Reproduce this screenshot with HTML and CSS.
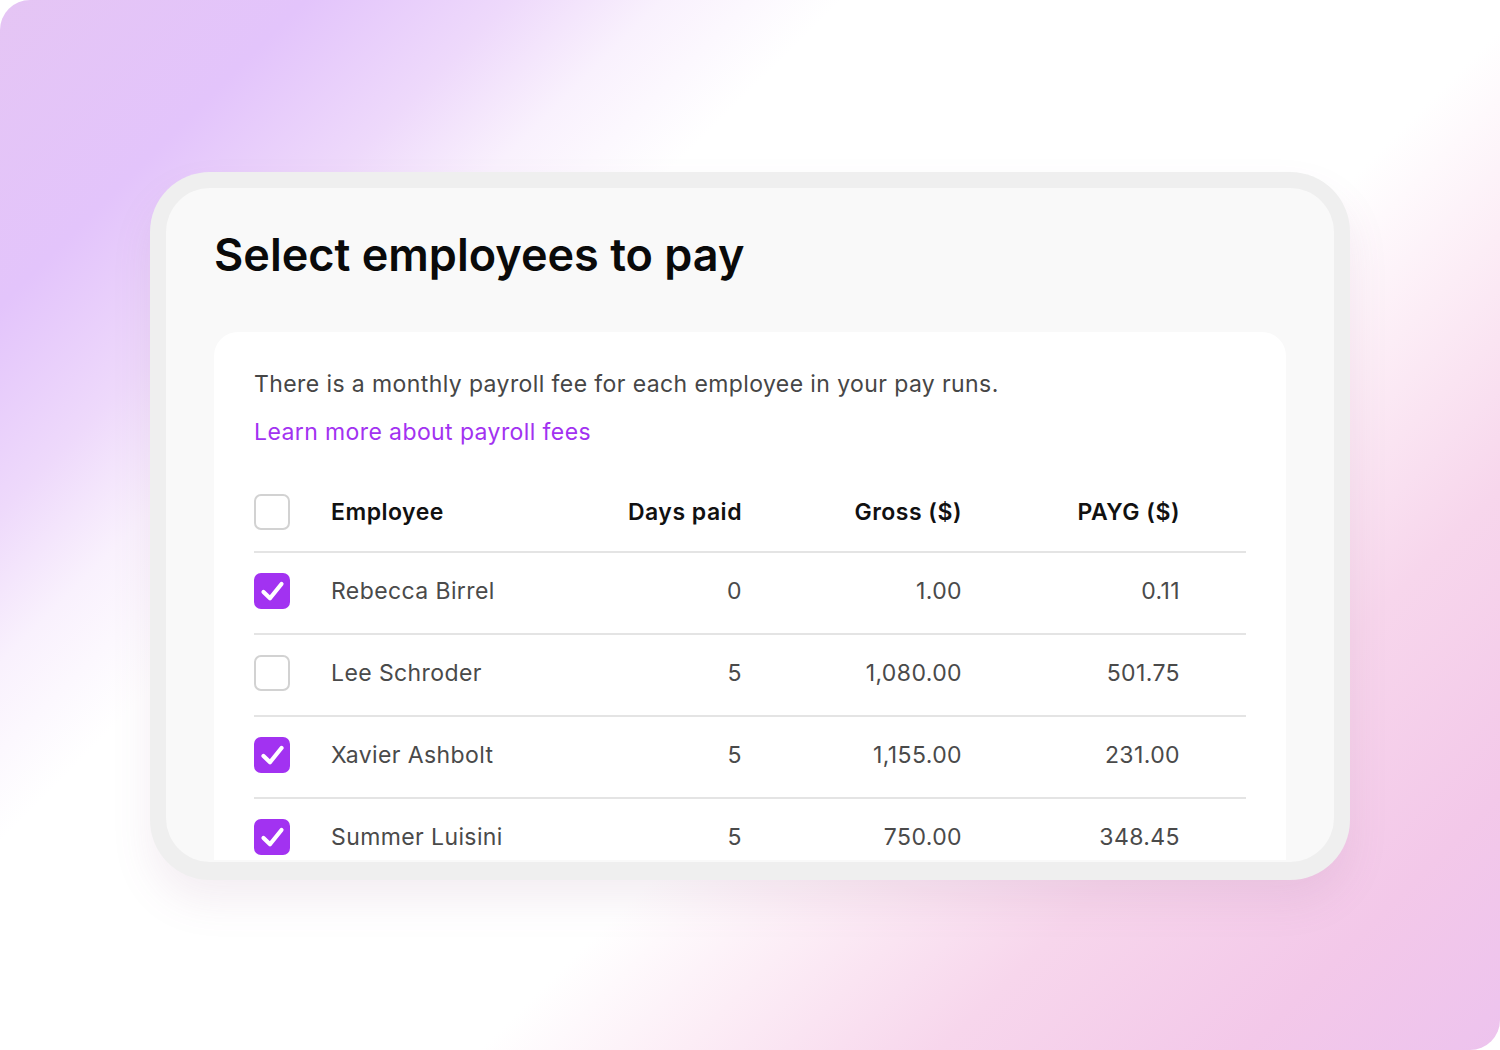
FILE: index.html
```html
<!DOCTYPE html>
<html lang="en">
<head>
<meta charset="utf-8">
<title>Select employees to pay</title>
<link rel="stylesheet" href="styles.css">
</head>
<body>
<div class="canvas">
  <div class="frame">
    <div class="sheet">
      <h1 class="title">Select employees to pay</h1>
      <div class="panel">
        <p class="fee">There is a monthly payroll fee for each employee in your pay runs.</p>
        <a class="link" href="#">Learn more about payroll fees</a>
        <div class="table">
          <div class="row head">
            <span class="box"></span>
            <span class="cell name">Employee</span>
            <span class="cell num">Days paid</span>
            <span class="cell num">Gross ($)</span>
            <span class="cell num">PAYG ($)</span>
            <span></span>
          </div>
          <div class="row">
            <span class="box on"><svg viewBox="0 0 36 36" width="36" height="36"><path d="M9.5 19 L16 25.2 L27.5 11" fill="none" stroke="#fff" stroke-width="4.2" stroke-linecap="round" stroke-linejoin="round"/></svg></span>
            <span class="cell name">Rebecca Birrel</span>
            <span class="cell num">0</span>
            <span class="cell num">1.00</span>
            <span class="cell num">0.11</span>
            <span></span>
          </div>
          <div class="row">
            <span class="box"></span>
            <span class="cell name">Lee Schroder</span>
            <span class="cell num">5</span>
            <span class="cell num">1,080.00</span>
            <span class="cell num">501.75</span>
            <span></span>
          </div>
          <div class="row">
            <span class="box on"><svg viewBox="0 0 36 36" width="36" height="36"><path d="M9.5 19 L16 25.2 L27.5 11" fill="none" stroke="#fff" stroke-width="4.2" stroke-linecap="round" stroke-linejoin="round"/></svg></span>
            <span class="cell name">Xavier Ashbolt</span>
            <span class="cell num">5</span>
            <span class="cell num">1,155.00</span>
            <span class="cell num">231.00</span>
            <span></span>
          </div>
          <div class="row">
            <span class="box on"><svg viewBox="0 0 36 36" width="36" height="36"><path d="M9.5 19 L16 25.2 L27.5 11" fill="none" stroke="#fff" stroke-width="4.2" stroke-linecap="round" stroke-linejoin="round"/></svg></span>
            <span class="cell name">Summer Luisini</span>
            <span class="cell num">5</span>
            <span class="cell num">750.00</span>
            <span class="cell num">348.45</span>
            <span></span>
          </div>
        </div>
      </div>
    </div>
  </div>
</div>
</body>
</html>
```

FILE: styles.css
```css
* { box-sizing: border-box; }

html, body {
  margin: 0;
  padding: 0;
  background: #ffffff;
}

body {
  font-family: Inter, "Noto Sans", "Liberation Sans", sans-serif;
  width: 1500px;
  height: 1050px;
  overflow: hidden;
}

.canvas {
  width: 1500px;
  height: 1050px;
  border-radius: 30px;
  padding: 172px 0 0 150px;
  background: linear-gradient(135deg,
    #e5c5f4 0%,
    #e3c4fb 12%,
    #eed9fb 20%,
    #f9f1fd 26%,
    #ffffff 33%,
    #ffffff 60%,
    #fcedf6 68%,
    #f7d6ec 78%,
    #f3c8e9 90%,
    #edc3ee 100%);
}

.frame {
  width: 1200px;
  background: #efefef;
  border-radius: 60px;
  padding: 16px 16px 18px;
  box-shadow: 0 22px 40px rgba(150, 90, 140, 0.10);
}

.sheet {
  height: 674px;
  background: #f9f9f9;
  border-radius: 44px;
  padding: 40px 48px 0;
  overflow: hidden;
}

.title {
  margin: 0;
  font-size: 45px;
  line-height: 53px;
  font-weight: 600;
  letter-spacing: 0;
  color: #0a0a0a;
}

.panel {
  margin-top: 51px;
  height: 528px;
  background: #ffffff;
  border-radius: 24px 24px 0 0;
  padding: 36px 40px 0;
  overflow: hidden;
}

.fee {
  margin: 0;
  font-size: 23px;
  line-height: 32px;
  letter-spacing: 0.4px;
  color: #464646;
}

.link {
  display: block;
  margin-top: 16px;
  font-size: 23px;
  line-height: 32px;
  letter-spacing: 0.4px;
  color: #a232f1;
  text-decoration: none;
}

.table {
  margin-top: 26px;
}

.row {
  display: grid;
  grid-template-columns: 77px 260px 151px 220px 218px 66px;
  align-items: center;
  height: 82px;
  padding-bottom: 5px;
  border-bottom: 2px solid #e4e4e4;
  font-size: 23px;
  line-height: 30px;
  letter-spacing: 0.4px;
  color: #4a4a4a;
}

.row.head {
  height: 79px;
  padding-bottom: 2px;
  font-weight: 600;
  letter-spacing: 0.5px;
  color: #111111;
}

.box {
  display: block;
  width: 36px;
  height: 36px;
  border: 2px solid #d2d2d2;
  border-radius: 7px;
  background: #ffffff;
}

.box.on {
  border: none;
  background: #a232f1;
}

.box svg { display: block; }

.cell.num { text-align: right; }
```
